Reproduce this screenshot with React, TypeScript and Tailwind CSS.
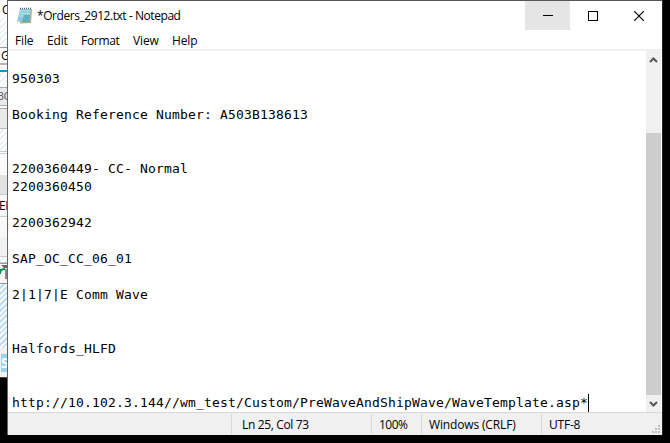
import React from "react";

const lines = [
  "", "950303", "", "Booking Reference Number: A503B138613", "", "",
  "2200360449- CC- Normal", "2200360450", "", "2200362942", "",
  "SAP_OC_CC_06_01", "", "2|1|7|E Comm Wave", "", "", "Halfords_HLFD", "", "",
];

const hatch = "bg-[repeating-linear-gradient(135deg,#ffffff_0px,#ffffff_2px,#e8f3f9_2px,#e8f3f9_4px)]";
const hatchDark = "bg-[repeating-linear-gradient(135deg,#f4fafd_0px,#f4fafd_2px,#bfdff0_2px,#bfdff0_4px)]";

function Background() {
  return (
    <div className="flex h-[443px] w-[7px] shrink-0 flex-col overflow-hidden bg-black font-['Open_Sans',sans-serif] text-[12px] leading-[16px] text-black">
      <div className="h-[18px] bg-white pl-[2px] pt-[2px]">C</div>
      <div className={`h-[29px] ${hatch}`} />
      <div className="h-[16px] border-t border-[#999] bg-white pl-px">G</div>
      <div className="h-[2px] bg-[#b5b5b5]" />
      <div className="h-[5px] bg-white" />
      <div className="h-[2px] bg-[#0a95d6]" />
      <div className={`h-[15px] ${hatch}`} />
      <div className="flex h-[19px] justify-end border-y border-[#aaa] bg-[#e9e9e9] text-[11px] tracking-[-0.5px] text-[#556]">
        <span className="-mr-[3px]">3C</span>
      </div>
      <div className="h-[3px] border-b border-[#aaa] bg-white" />
      <div className="h-[20px] border-b border-[#bbb] bg-[#e9e9e9]" />
      <div className={`h-[22px] ${hatch}`} />
      <div className="h-[3px] border-y border-[#ccc] bg-white" />
      <div className="h-[21px] bg-[#fafafa]" />
      <div className="h-[19px] bg-[#e2e2e2]" />
      <div className="flex h-[23px] items-center border-y border-[#ccc] bg-[#f8f8f8]">
        <span className="-ml-px tracking-[-0.5px]">EI</span>
      </div>
      <div className="h-[20px] bg-[#f8f8f8]" />
      <div className="h-[19px] bg-[#f1f1f1]" />
      <div className={`h-[7px] border-y border-[#ccc] ${hatch}`} />
      <div className="h-[21px] border-y border-[#999] bg-[#f5f5f5]">
        <svg width="7" height="19" viewBox="0 0 7 19">
          <path d="M1 1h6v3H4z" fill="#666" />
          <path d="M5 5h2v10H5z" fill="#8b8790" />
          <path d="M0 9c0-3 2-4 5-4M0 5v5" fill="none" stroke="#079447" strokeWidth="2" />
        </svg>
      </div>
      <div className={`h-[64px] ${hatchDark}`} />
      <div className="h-[29px] bg-[#f0f0f0] pl-px pt-[6px]">
        <div className="h-[18px] bg-[#9bd4ee] text-[14px] font-bold leading-[18px] text-white">S</div>
      </div>
      <div className="h-px bg-[#444]" />
    </div>
  );
}

function StatusBar() {
  return (
    <div className="flex h-[23px] shrink-0 border-t border-[#d7d7d7] bg-[#f0f0f0] pt-px font-['Open_Sans',sans-serif] text-[12px] leading-[22px]">
      <div className="h-[20px] w-[224px] border-r border-[#d7d7d7]" />
      <div className="h-[20px] w-[140px] border-r border-[#d7d7d7] pl-[10px] tracking-[-0.35px]">Ln 25, Col 73</div>
      <div className="h-[20px] w-[50px] border-r border-[#d7d7d7] pl-[7px] tracking-[-0.5px]">100%</div>
      <div className="h-[20px] w-[120px] border-r border-[#d7d7d7] pl-[7px] tracking-[-0.15px]">Windows (CRLF)</div>
      <div className="flex-1 pl-[7px] tracking-[-0.2px]">UTF-8</div>
      <svg className="mr-[2px] mt-[11px]" width="8" height="8" viewBox="0 0 8 8" fill="#bfbfbf">
        <path d="M6 0h2v2H6zM3 3h2v2H3zM6 3h2v2H6zM0 6h2v2H0zM3 6h2v2H3zM6 6h2v2H6z" />
      </svg>
    </div>
  );
}

export default function App() {
  return (
    <div className="flex h-[443px] w-[670px] overflow-hidden bg-black">
      <Background />
      <div className="flex h-[435px] w-[656px] flex-col border-x border-t border-l-[#666] border-r-[#222] border-t-[#555] bg-white text-black">
        <div className="flex h-[29px] shrink-0">
          <div className="flex flex-1 items-center pl-[9px] font-['Open_Sans',sans-serif] text-[12px] tracking-[-0.44px]">
            <svg className="mr-[5px]" width="15" height="17" viewBox="0 0 15 17">
              <path d="M4 2h11l-1 14-11 .5z" fill="#bba77b" />
              <path d="M3 2h11l-2 13-12-.5z" fill="#8bcbd8" />
              <path d="M2.5 4h11M2 6.5h11M1.7 9h11" stroke="#b9e3e9" />
              <path d="M7 8h6l-1 7H5z" fill="#5bb0c1" />
              <path d="M3 1.5h11" stroke="#53626a" strokeWidth="1.4" strokeDasharray="1 1" />
            </svg>
            *Orders_2912.txt - Notepad
          </div>
          <div className="flex h-[29px] w-[45px] items-center justify-center bg-[#e5e5e5]"><div className="h-px w-[10px] bg-black" /></div>
          <div className="flex w-[45px] items-center justify-center"><div className="size-[10px] border border-black" /></div>
          <div className="flex w-[47px] items-center justify-center pl-px">
            <svg width="10" height="10" viewBox="0 0 10 10"><path d="M0 0l10 10M10 0L0 10" stroke="#000" strokeWidth="1.2" /></svg>
          </div>
        </div>
        <div className="flex h-[21px] shrink-0 items-center border-b-2 border-[#f0f0f0] pt-[3px] font-['Open_Sans',sans-serif] text-[12px] tracking-[-0.15px]">
          <span className="ml-[7px] w-8">File</span><span className="w-[34px]">Edit</span><span className="w-[52px] tracking-[-0.3px]">Format</span><span className="w-[39px]">View</span><span>Help</span>
        </div>
        <div className="flex h-[361px] shrink-0">
          <div className="flex-1 whitespace-pre pl-1 pt-px font-['DejaVu_Sans_Mono',monospace] text-[13px] leading-[18px] tracking-[0.174px]">
            {lines.map((line, i) => (
              <div key={i} className="h-[18px]">{line}</div>
            ))}
            <div className="flex h-[18px]">
              <span>http://10.102.3.144//wm_test/Custom/PreWaveAndShipWave/WaveTemplate.asp*</span>
              <span className="h-[18px] w-px bg-black" />
            </div>
          </div>
          <div className="mr-px flex w-[15px] flex-col items-center bg-[#f0f0f0]">
            <svg className="mt-[5px]" width="9" height="8" viewBox="0 0 9 8"><path d="M1 6l3.5-3.5L8 6" fill="none" stroke="#555" strokeWidth="2" /></svg>
            <div className="mt-[69px] h-[262px] w-full bg-[#cdcdcd]" />
            <svg className="mt-[5px]" width="9" height="8" viewBox="0 0 9 8"><path d="M1 2l3.5 3.5L8 2" fill="none" stroke="#555" strokeWidth="2" /></svg>
          </div>
        </div>
        <StatusBar />
      </div>
    </div>
  );
}
